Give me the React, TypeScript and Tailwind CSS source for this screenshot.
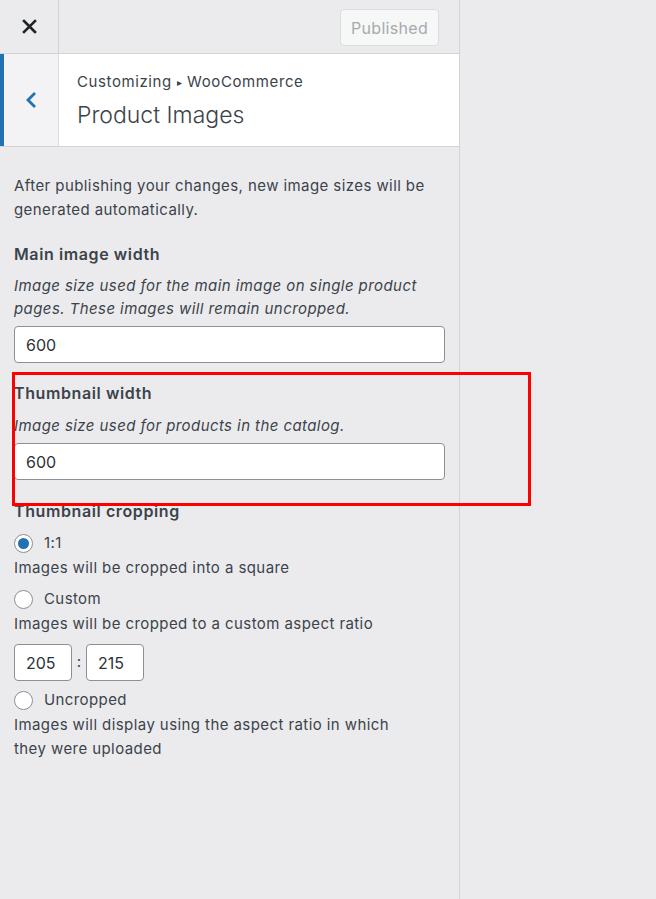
import React from 'react';

const Radio = ({ checked, label }: { checked?: boolean; label: string }) => (
  <div className="flex items-center h-[25px]">
    <span className="flex items-center justify-center w-[19px] h-[19px] rounded-full border border-[#8c8f94] bg-white">
      {checked && <span className="w-[11px] h-[11px] rounded-full bg-[#2271b1]" />}
    </span>
    <span className="ml-[11px] text-[15px] tracking-[0.4px] text-[#3c434a]">{label}</span>
  </div>
);

export default function App() {
  return (
    <div
      className="relative w-[656px] h-[899px] bg-[#ebebee] overflow-hidden"
      style={{ fontFamily: 'Inter, "Liberation Sans", sans-serif' }}
    >
      <div className="w-[460px] h-full border-r border-[#d4d4d8] flex flex-col">
        {/* top bar */}
        <div className="h-[54px] flex border-b border-[#d4d4d8]">
          <div className="w-[59px] flex items-center justify-center border-r border-[#d4d4d8]">
            <svg width="15" height="15" viewBox="0 0 15 15">
              <path d="M2 2L13 13M13 2L2 13" stroke="#1d2327" strokeWidth="2.6" strokeLinecap="square" />
            </svg>
          </div>
          <div className="flex-1 flex items-start justify-end pt-[9px] pr-[20px]">
            <div className="w-[99px] h-[37px] rounded-[4px] border border-[#dcdcde] bg-[#f6f7f7] flex items-center justify-center text-[16px] tracking-[0.3px] text-[#a7aaad]">
              Published
            </div>
          </div>
        </div>

        {/* section header */}
        <div className="h-[93px] flex bg-white border-b border-[#d4d4d8]">
          <div className="w-[59px] flex items-center justify-center bg-[#f3f3f5] border-l-[4px] border-[#2271b1] border-r border-r-[#dcdcde]">
            <svg width="14" height="18" viewBox="0 0 14 18">
              <path d="M11 2L4 9L11 16" fill="none" stroke="#2271b1" strokeWidth="2.8" />
            </svg>
          </div>
          <div className="pl-[18px] pt-[17px]">
            <div className="text-[15px] leading-[22px] tracking-[0.6px] text-[#3c434a]">
              Customizing <span className="text-[10px] relative -top-[1px]">▸</span> WooCommerce
            </div>
            <div className="text-[23px] leading-[30px] mt-[6px] font-light text-[#3c434a]">Product Images</div>
          </div>
        </div>

        {/* controls */}
        <div className="px-[14px] pt-[27px] text-[#3c434a]">
          <p className="text-[15px] leading-[24px] tracking-[0.42px]">
            After publishing your changes, new image sizes will be generated automatically.
          </p>

          <div className="mt-[20px] text-[16px] font-semibold leading-[24px] tracking-[0.6px]">Main image width</div>
          <p className="mt-[8px] text-[15px] italic leading-[23px] tracking-[0.42px]">
            Image size used for the main image on single product pages. These images will remain uncropped.
          </p>
          <div className="mt-[6px] h-[37px] rounded-[4px] border border-[#8c8f94] bg-white flex items-center px-[11px] text-[16px] text-[#2c3338]">
            600
          </div>

          <div className="mt-[18px] text-[16px] font-semibold leading-[24px] tracking-[0.6px]">Thumbnail width</div>
          <p className="mt-[9px] text-[15px] italic leading-[23px] tracking-[0.42px]">
            Image size used for products in the catalog.
          </p>
          <div className="mt-[6px] h-[37px] rounded-[4px] border border-[#8c8f94] bg-white flex items-center px-[11px] text-[16px] text-[#2c3338]">
            600
          </div>

          <div className="mt-[19px] text-[16px] font-semibold leading-[24px] tracking-[0.6px]">Thumbnail cropping</div>
          <div className="mt-[8px]">
            <Radio checked label="1:1" />
            <p className="text-[15px] leading-[24px] tracking-[0.42px]">Images will be cropped into a square</p>
          </div>
          <div className="mt-[7px]">
            <Radio label="Custom" />
            <p className="text-[15px] leading-[24px] tracking-[0.42px]">
              Images will be cropped to a custom aspect ratio
            </p>
          </div>
          <div className="mt-[8px] flex items-center">
            <div className="w-[58px] h-[37px] rounded-[4px] border border-[#8c8f94] bg-white flex items-center pl-[11px] text-[16px] text-[#2c3338]">
              205
            </div>
            <span className="w-[14px] text-center text-[15px]">:</span>
            <div className="w-[58px] h-[37px] rounded-[4px] border border-[#8c8f94] bg-white flex items-center pl-[11px] text-[16px] text-[#2c3338]">
              215
            </div>
          </div>
          <div className="mt-[7px]">
            <Radio label="Uncropped" />
            <p className="text-[15px] leading-[24px] tracking-[0.42px] w-[400px]">
              Images will display using the aspect ratio in which they were uploaded
            </p>
          </div>
        </div>
      </div>

      {/* annotation */}
      <div className="absolute left-[12px] top-[372px] w-[519px] h-[134px] border-[3px] border-[#ff0000] pointer-events-none" />
    </div>
  );
}
